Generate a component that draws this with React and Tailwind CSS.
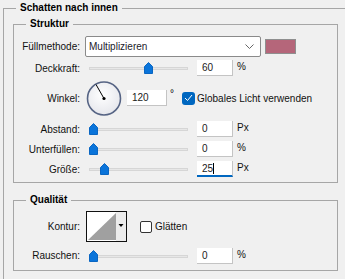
import React from "react";

function Thumb() {
  return (
    <svg width="9" height="12" viewBox="0 0 9 12">
      <path d="M0.5 4.5 L4.5 0.5 L8.5 4.5 V11.5 H0.5 Z" fill="#0a74da" stroke="#0a66c2" />
    </svg>
  );
}

function Slider({ at }) {
  return (
    <div className="relative w-[99px] h-[12px] ml-[9px]">
      <div className="absolute left-0 right-0 top-[5px] h-[3px] bg-[#e7e7e7] border border-[#d6d6d6]" />
      <div className="absolute top-0" style={{ left: at }}>
        <Thumb />
      </div>
    </div>
  );
}

function NumBox({ value, active, w = "w-[36px]" }) {
  return (
    <div
      className={`${w} h-[16px] bg-white border-b border-r border-[#c4c4c4] px-[5px] text-[10px] leading-[16px] text-[#1b1b1b] ${
        active ? "border-b-2 border-b-[#0067c0]" : ""
      }`}
    >
      {value}
      {active && <span className="inline-block w-px h-[11px] bg-black align-[-2px]" />}
    </div>
  );
}

function Label({ children }) {
  return <div className="w-[66px] shrink-0 text-right text-[10px] text-[#111]">{children}</div>;
}

function SliderRow({ label, at, value, unit, active, h = "h-[16px]" }) {
  return (
    <div className={`flex items-center ${h}`}>
      <Label>{label}</Label>
      <Slider at={at} />
      <div className="ml-[9px]">
        <NumBox value={value} active={active} />
      </div>
      <div className="ml-[4px] text-[10px] text-[#111] -mt-[3px]">{unit}</div>
    </div>
  );
}

export default function App() {
  return (
    <div className="w-[345px] h-[279px] overflow-hidden bg-[#f0f0f0] font-['Liberation_Sans',Arial,sans-serif] text-black">
      <fieldset className="ml-[3px] mt-[1px] w-[370px] h-[300px] border border-[#a6a6a6]">
        <legend className="ml-[12px] px-[4px] text-[10px] leading-[14px] font-bold">Schatten nach innen</legend>

        <fieldset className="ml-[9px] mt-[2px] w-[325px] border border-[#a6a6a6] pt-[5px] pb-[5px]">
          <legend className="ml-[12px] px-[4px] text-[10px] leading-[14px] font-bold">Struktur</legend>

          <div className="flex items-center h-[21px]">
            <Label>Füllmethode:</Label>
            <div className="ml-[5px] w-[176px] h-[21px] bg-white border border-[#8a8a8a] rounded-[2px] flex items-center justify-between pl-[3px] pr-[6px]">
              <span className="text-[10px] text-[#1b1b2b]">Multiplizieren</span>
              <svg width="9" height="5" viewBox="0 0 9 5">
                <polyline points="0.5,0.5 4.5,4.5 8.5,0.5" fill="none" stroke="#666" />
              </svg>
            </div>
            <div className="ml-[4px] w-[31px] h-[15px] bg-[#b5667a] border border-[#8f8f8f]" />
          </div>

          <div className="mt-[3px]">
            <SliderRow label="Deckkraft:" at={55} value="60" unit="%" />
          </div>

          <div className="mt-[4px] flex items-center h-[37px]">
            <Label>Winkel:</Label>
            <svg className="ml-[6px]" width="36" height="37" viewBox="0 0 36 37">
              <defs>
                <radialGradient id="dial" cx="0.45" cy="0.4" r="0.6">
                  <stop offset="0" stopColor="#ffffff" />
                  <stop offset="1" stopColor="#e6e7ec" />
                </radialGradient>
              </defs>
              <circle cx="18" cy="18.5" r="16.5" fill="url(#dial)" stroke="#566484" strokeWidth="1.6" />
              <line x1="18" y1="18.5" x2="10" y2="4.5" stroke="#000" strokeWidth="1" />
              <circle cx="18" cy="18.5" r="1.6" fill="#000" />
            </svg>
            <div className="ml-[5px] -mt-[1px]">
              <NumBox value="120" w="w-[40px]" />
            </div>
            <div className="ml-[3px] -mt-[10px] text-[10px]">°</div>
            <div className="ml-[8px] -mt-[1px] w-[13px] h-[13px] rounded-[3px] bg-[#0067c0] flex items-center justify-center">
              <svg width="9" height="8" viewBox="0 0 9 8">
                <polyline points="1,4 3.5,6.5 8,1" fill="none" stroke="#fff" strokeWidth="1" />
              </svg>
            </div>
            <div className="ml-[2px] -mt-[1px] text-[10px] text-[#111]">Globales Licht verwenden</div>
          </div>

          <div className="mt-[4px]">
            <SliderRow label="Abstand:" at={0} value="0" unit="Px" />
          </div>
          <div className="mt-[4px]">
            <SliderRow label="Unterfüllen:" at={0} value="0" unit="%" />
          </div>
          <div className="mt-[4px]">
            <SliderRow label="Größe:" at={11} value="25" unit="Px" active />
          </div>
        </fieldset>

        <fieldset className="ml-[9px] mt-[10px] w-[325px] border border-[#a6a6a6] pt-[4px] pb-[7px]">
          <legend className="ml-[12px] px-[4px] text-[10px] leading-[14px] font-bold">Qualität</legend>

          <div className="flex items-center h-[31px]">
            <Label>Kontur:</Label>
            <svg className="ml-[6px]" width="41" height="31" viewBox="0 0 41 31">
              <rect x="0.5" y="0.5" width="40" height="30" fill="#fff" stroke="#111" />
              <polygon points="2,29 30,2 30,29" fill="#a0a0a0" />
              <rect x="30" y="1" width="10" height="29" fill="#ececec" />
              <polygon points="32.5,13 37.5,13 35,16" fill="#000" />
            </svg>
            <div className="ml-[13px] w-[12px] h-[12px] rounded-[2px] border border-[#333] bg-white" />
            <div className="ml-[3px] text-[10px] text-[#111]">Glätten</div>
          </div>

          <div className="mt-[6px]">
            <SliderRow label="Rauschen:" at={0} value="0" unit="%" h="h-[15px]" />
          </div>
        </fieldset>
      </fieldset>
    </div>
  );
}
